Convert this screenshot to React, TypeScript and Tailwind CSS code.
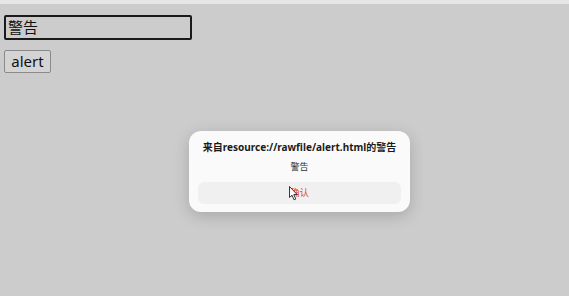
export default function App() {
  return (
    <div className="relative h-[296px] w-[569px] overflow-hidden bg-[#cccccc] font-['Noto_Sans','Noto_Sans_CJK_SC',sans-serif]">
      <div className="h-1 bg-[#e6e6e6]" />
      <div className="flex flex-col items-start gap-[10px] px-1 pt-[11px]">
        <div className="flex h-[25px] w-[188px] items-center rounded-[2px] border-2 border-[#1a1a1a] px-[2px] text-[15px] leading-none text-[#111]">
          警告
        </div>
        <button
          type="button"
          className="h-[23px] w-[47px] rounded-[2px] border border-[#8a8a8a] bg-[#d4d4d4] text-[15px] leading-none text-[#111]"
        >
          alert
        </button>
      </div>

      <div className="absolute left-[189px] top-[131px] flex h-[81px] w-[221px] flex-col items-center rounded-[12px] bg-[#fafafa] px-[9px] pt-[9px] shadow-[0_4px_16px_rgba(0,0,0,0.18)]">
        <p className="text-[10px] font-bold leading-[14px] text-[#1a1a1a]">来自resource://rawfile/alert.html的警告</p>
        <p className="mt-[7px] text-[9px] leading-[12px] text-[#333]">警告</p>
        <div className="relative mt-[9px] flex h-[22px] w-full items-center justify-center rounded-[6px] bg-[#f0f0f0] text-[9.5px] text-[#e0452f]">
          确认
          <svg className="absolute left-[91px] top-[4px]" width="10" height="15" viewBox="0 0 10 15">
            <path d="M0.5 0.5 L0.5 11.5 L3 9.2 L5 13.8 L6.8 13 L4.8 8.6 L8.2 8.6 Z" fill="#fff" stroke="#222" strokeWidth="0.9" strokeLinejoin="round" />
          </svg>
        </div>
      </div>
    </div>
  )
}
